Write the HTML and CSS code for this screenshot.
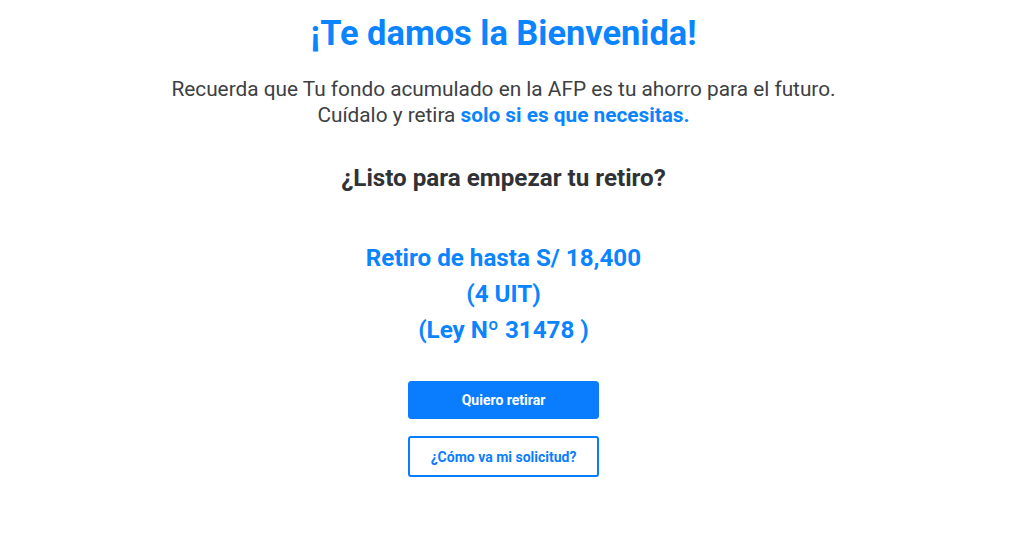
FILE: index.html
```html
<!DOCTYPE html>
<html lang="es">
<head>
<meta charset="utf-8">
<link rel="stylesheet" href="styles.css">
</head>
<body>
<main class="welcome">
  <h1 class="title">¡Te damos la Bienvenida!</h1>
  <p class="intro">Recuerda que Tu fondo acumulado en la AFP es tu ahorro para el futuro.<br>Cuídalo y retira <strong class="hl">solo si es que necesitas.</strong></p>
  <h2 class="question">¿Listo para empezar tu retiro?</h2>
  <div class="amount">
    <div>Retiro de hasta S/ 18,400</div>
    <div>(4 UIT)</div>
    <div>(Ley Nº 31478 )</div>
  </div>
  <div class="actions">
    <button class="btn btn-primary">Quiero retirar</button>
    <button class="btn btn-outline">¿Cómo va mi solicitud?</button>
  </div>
</main>
</body>
</html>
```
FILE: styles.css
```css
html, body {
  margin: 0;
  padding: 0;
  background: #fff;
}
body {
  font-family: Roboto, "Liberation Sans", sans-serif;
  color: #3d3f43;
}
.welcome {
  display: flex;
  flex-direction: column;
  align-items: center;
  text-align: center;
  padding: 12px 17px 0 0;
}
.title {
  margin: 0;
  font-size: 34.4px;
  line-height: 42px;
  font-weight: 700;
  color: #0a84ff;
}
.intro {
  margin: 22px 0 0;
  font-size: 20.8px;
  line-height: 26px;
  color: #3d3f43;
}
.hl {
  color: #0a84ff;
  font-weight: 700;
}
.question {
  margin: 35px 0 0;
  font-size: 24.2px;
  line-height: 30px;
  font-weight: 700;
  color: #2f3236;
}
.amount {
  margin-top: 47px;
  font-size: 24.2px;
  line-height: 36px;
  font-weight: 700;
  color: #0a84ff;
}
.actions {
  margin-top: 33px;
  display: flex;
  flex-direction: column;
  gap: 17px;
}
.btn {
  width: 191px;
  font-family: Roboto, "Liberation Sans", sans-serif;
  font-size: 14px;
  font-weight: 700;
  border-radius: 3px;
  cursor: pointer;
}
.btn-primary {
  height: 38px;
  background: #0a7dff;
  color: #fff;
  border: 1px solid #0a7dff;
}
.btn-outline {
  height: 41px;
  background: #fff;
  color: #0a7dff;
  border: 2px solid #0a7dff;
}
```
